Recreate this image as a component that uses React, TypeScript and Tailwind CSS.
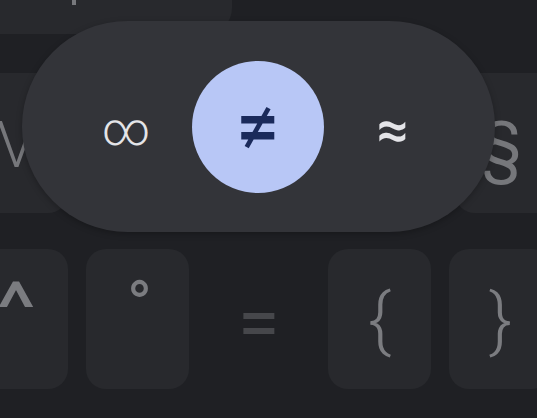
import React from "react";

const keyCls =
  "relative w-[103px] h-[140px] shrink-0 rounded-[20px] bg-[#28292d] flex items-center justify-center";

export default function App() {
  return (
    <div
      className="relative w-[537px] h-[418px] overflow-hidden bg-[#1f2024]"
      style={{ fontFamily: "Roboto, 'Noto Sans', sans-serif" }}
    >
      {/* keyboard rows */}
      <div className="flex flex-col gap-[39px] mt-[-106px]">
        {/* row 1 */}
        <div className="flex h-[140px]">
          <div className="relative w-[232px] h-[140px] shrink-0 rounded-br-[26px] bg-[#28292d]">
            <div className="absolute left-[72px] top-[106px] w-[4px] h-[5px] bg-[#77787c]" />
          </div>
        </div>
        {/* row 2 */}
        <div className="flex h-[139px] gap-[18px] ml-[-35px]">
          <div className={keyCls}>
            <span className="text-[64px] leading-none text-[#76777b] font-light pt-[6px]">V</span>
          </div>
          <div className="flex-1" />
          <div className={keyCls + " mr-[-21px]"}>
            <span className="text-[66px] leading-none text-[#76777b] pr-[10px] pt-[8px]">§</span>
          </div>
        </div>
        {/* row 3 */}
        <div className="flex h-[141px] gap-[18px] ml-[-35px] -mt-[2px]">
          <div className={keyCls}>
            <span className="text-[72px] leading-none text-[#7b7c80] scale-x-[1.35] pb-[20px]">^</span>
          </div>
          <div className={keyCls}>
            <span className="text-[68px] leading-none text-[#7b7c80] pb-[26px] pl-[4px]">°</span>
          </div>
          <div className="w-[103px] h-[140px] shrink-0 flex items-center justify-center">
            <span className="text-[76px] leading-none text-[#46474b] pt-[8px]">=</span>
          </div>
          <div className={keyCls}>
            <span className="text-[70px] leading-none text-[#7b7c80] font-light pt-[2px]">{"{"}</span>
          </div>
          <div className={keyCls}>
            <span className="text-[70px] leading-none text-[#7b7c80] font-light pt-[2px]">{"}"}</span>
          </div>
        </div>
      </div>

      {/* popup */}
      <div className="absolute left-[22px] top-[21px] w-[473px] h-[211px] rounded-[106px] bg-[#333439] flex items-center shadow-[0_2px_6px_rgba(0,0,0,0.25)]">
        <div className="w-[208px] flex items-center justify-center">
          <span className="text-[46px] leading-none text-[#e4e4e8] font-light pt-[4px]">∞</span>
        </div>
        <div className="w-[132px] h-[132px] rounded-full bg-[#b8c7f6] flex items-center justify-center -ml-[38px]">
          <span className="text-[78px] leading-none text-[#1a2a5b] font-medium">≠</span>
        </div>
        <div className="flex-1 flex items-center justify-center pr-[34px]">
          <span className="text-[56px] leading-none text-[#e4e4e8] font-medium pt-[6px]">≈</span>
        </div>
      </div>
    </div>
  );
}
